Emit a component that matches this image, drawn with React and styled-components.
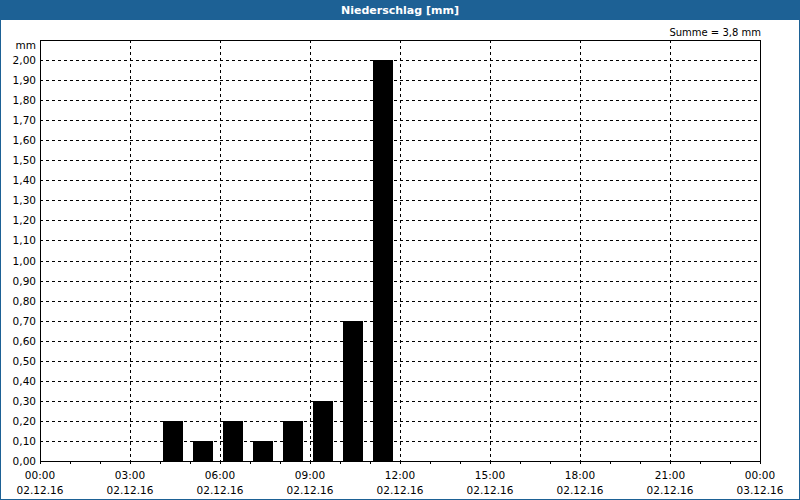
import React from "react";
import styled, { createGlobalStyle } from "styled-components";

const Global = createGlobalStyle`
  html, body { margin: 0; padding: 0; background: #fff; }
  body { font-family: Tahoma, "DejaVu Sans", "Liberation Sans", sans-serif; }
`;

const Frame = styled.div`
  width: 800px;
  height: 500px;
  display: flex;
  flex-direction: column;
  box-sizing: border-box;
`;

const TitleBar = styled.div`
  height: 20px;
  flex-shrink: 0;
  background: #1d6195;
  color: #fff;
  font: bold 11px "DejaVu Sans", "Liberation Sans", sans-serif;
  display: flex;
  align-items: center;
  justify-content: center;
`;

const Body = styled.div`
  flex: 1;
  border: 1px solid #1d6195;
  border-top: none;
  background: #fff;
  display: flex;
  flex-direction: column;
  overflow: hidden;
`;

const SumRow = styled.div`
  height: 18px;
  flex-shrink: 0;
  display: flex;
  align-items: flex-end;
  justify-content: flex-end;
  padding-right: 38px;
  font: 10px "DejaVu Sans", "Liberation Sans", sans-serif;
  color: #000;
`;

const bars = [
  [163, 0.2], [193, 0.1], [223, 0.2], [253, 0.1],
  [283, 0.2], [313, 0.3], [343, 0.7], [373, 2.0],
];

const Y0 = 461;
const step = 20.05;
const yOf = (v) => Math.round(Y0 - v * 10 * step);

function Chart() {
  const hLines = [];
  const yLabels = [];
  for (let i = 0; i <= 20; i++) {
    const y = Math.round(Y0 - i * step);
    if (i > 0)
      hLines.push(<line key={i} x1="40" x2="760" y1={y} y2={y} stroke="#000" strokeDasharray="3 3" />);
    yLabels.push(
      <text key={i} x="36" y={y + 4} textAnchor="end">{(i / 10).toFixed(2).replace(".", ",")}</text>
    );
  }
  const vLines = [];
  const xLabels = [];
  for (let i = 0; i <= 8; i++) {
    const x = 40 + i * 90;
    if (i > 0 && i < 8)
      vLines.push(<line key={i} x1={x} x2={x} y1="40" y2={Y0} stroke="#000" strokeDasharray="3 3" />);
    xLabels.push(
      <g key={i}>
        <text x={x} y="479" textAnchor="middle">{String((i * 3) % 24).padStart(2, "0")}:00</text>
        <text x={x} y="494" textAnchor="middle">{i === 8 ? "03.12.16" : "02.12.16"}</text>
      </g>
    );
  }
  const ticks = [];
  for (let i = 0; i <= 24; i++) {
    const x = 40 + i * 30;
    ticks.push(<line key={i} x1={x} x2={x} y1={Y0} y2={Y0 + 3} stroke="#000" />);
  }
  return (
    <svg width="798" height="460" viewBox="1 38 798 460" shapeRendering="crispEdges"
      style={{ fontFamily: '"DejaVu Sans", "Liberation Sans", sans-serif', fontSize: 10.5, display: "block" }}>
      {hLines}
      {vLines}
      {bars.map(([x, v]) => (
        <rect key={x} x={x} y={yOf(v)} width="20" height={Y0 - yOf(v)} fill="#000" />
      ))}
      <line x1="40" x2="760" y1="40" y2="40" stroke="#000" />
      <line x1="40" x2="40" y1="40" y2={Y0} stroke="#000" />
      <line x1="760" x2="760" y1="40" y2={Y0} stroke="#000" />
      <line x1="40" x2="760" y1={Y0} y2={Y0} stroke="#000" />
      {ticks}
      <text x="36" y="49" textAnchor="end">mm</text>
      {yLabels}
      {xLabels}
    </svg>
  );
}

export default function App() {
  return (
    <>
      <Global />
      <Frame>
        <TitleBar>Niederschlag [mm]</TitleBar>
        <Body>
          <SumRow>Summe = 3,8 mm</SumRow>
          <Chart />
        </Body>
      </Frame>
    </>
  );
}
